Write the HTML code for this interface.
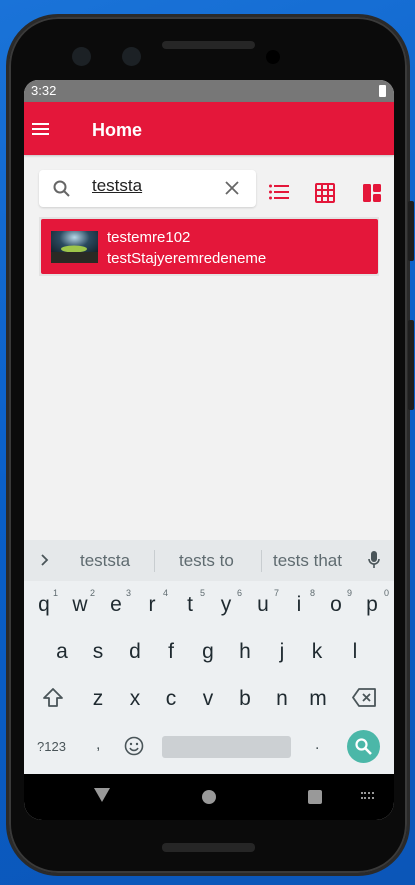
<!DOCTYPE html>
<html><head><meta charset="utf-8"><style>
*{margin:0;padding:0;box-sizing:border-box}
body{width:415px;height:885px;overflow:hidden;position:relative;background:linear-gradient(160deg,#1a73d8 0%,#0a5fc8 50%,#0b56b8 100%);font-family:"Liberation Sans",sans-serif}
.a{position:absolute}
.k{position:absolute;font-size:21px;color:#1f2a30;transform:translateX(-50%)}
.n{position:absolute;font-size:9px;color:#5f6b70}
</style></head><body>
<!-- phone body -->
<div class="a" style="left:6px;top:14px;width:404px;height:862px;background:#0b0b0b;border-radius:52px;border:3px solid #2a2a2a;box-shadow:inset 0 0 0 2px #3a3a3a"></div>
<div class="a" style="left:408px;top:201px;width:6px;height:60px;background:#1e1e1e;border-radius:2px"></div>
<div class="a" style="left:408px;top:320px;width:6px;height:90px;background:#1e1e1e;border-radius:2px"></div>
<!-- cameras & speaker -->
<div class="a" style="left:72px;top:47px;width:19px;height:19px;border-radius:50%;background:#1c2125"></div>
<div class="a" style="left:122px;top:47px;width:19px;height:19px;border-radius:50%;background:#1c2125"></div>
<div class="a" style="left:162px;top:41px;width:93px;height:8px;border-radius:4px;background:#262626"></div>
<div class="a" style="left:266px;top:50px;width:14px;height:14px;border-radius:50%;background:#000"></div>
<div class="a" style="left:162px;top:843px;width:93px;height:9px;border-radius:4px;background:#262626"></div>
<!-- screen -->
<div class="a" style="left:24px;top:80px;width:370px;height:740px;background:#f2f2f2;border-radius:14px 14px 18px 18px;overflow:hidden">
 <div class="a" style="left:0;top:0;width:370px;height:22px;background:#777"></div>
 <div class="a" style="left:7px;top:3px;color:#fff;font-size:13px">3:32</div>
 <div class="a" style="left:355px;top:5px;width:7px;height:12px;background:#fff;border-radius:1px"></div>
 <div class="a" style="left:0;top:22px;width:370px;height:53px;background:#e4173a;box-shadow:0 1px 2px rgba(0,0,0,.2)"></div>
 <div class="a" style="left:8px;top:43px;width:17px;height:2px;background:#fff;box-shadow:0 5px 0 #fff,0 10px 0 #fff"></div>
 <div class="a" style="left:68px;top:40px;color:#fff;font-size:18px;font-weight:bold">Home</div>
 <!-- search -->
 <div class="a" style="left:15px;top:90px;width:217px;height:37px;background:#fff;border-radius:4px;box-shadow:0 1px 2px rgba(0,0,0,.15)"></div>
 <svg class="a" style="left:28px;top:99px" width="20" height="20" viewBox="0 0 20 20"><circle cx="8" cy="8" r="5.5" fill="none" stroke="#666" stroke-width="2"/><path d="M12 12l5 5" stroke="#666" stroke-width="2"/></svg>
 <div class="a" style="left:68px;top:96px;font-size:17px;color:#222;text-decoration:underline">teststa</div>
 <svg class="a" style="left:201px;top:101px" width="14" height="14" viewBox="0 0 14 14"><path d="M1 1l12 12M13 1L1 13" stroke="#666" stroke-width="1.8"/></svg>
 <!-- icons -->
 <svg class="a" style="left:245px;top:104px" width="20" height="16" viewBox="0 0 20 16"><g fill="#e4173a"><circle cx="1.5" cy="2" r="1.5"/><circle cx="1.5" cy="8" r="1.5"/><circle cx="1.5" cy="14" r="1.5"/><rect x="5" y="1" width="15" height="2"/><rect x="5" y="7" width="15" height="2"/><rect x="5" y="13" width="15" height="2"/></g></svg>
 <svg class="a" style="left:291px;top:103px" width="20" height="20" viewBox="0 0 20 20"><rect x="1" y="1" width="18" height="18" rx="1" fill="none" stroke="#e4173a" stroke-width="2"/><path d="M7 1v18M13 1v18M1 7h18M1 13h18" stroke="#e4173a" stroke-width="2"/></svg>
 <svg class="a" style="left:339px;top:104px" width="18" height="18" viewBox="0 0 18 18"><g fill="#e4173a"><rect x="0" y="0" width="8" height="18" rx="1.5"/><rect x="10" y="0" width="8" height="8" rx="1.5"/><rect x="10" y="10" width="8" height="8" rx="1.5"/></g></svg>
 <!-- card -->
 <div class="a" style="left:15px;top:137px;width:340px;height:59px;background:#e3e3e3"></div>
 <div class="a" style="left:17px;top:139px;width:337px;height:55px;background:#e4173a;border-radius:2px"></div>
 <svg class="a" style="left:27px;top:151px" width="47" height="32" viewBox="0 0 47 32"><defs><radialGradient id="g" cx=".5" cy=".2" r=".8"><stop offset="0" stop-color="#b8d8e8"/><stop offset=".4" stop-color="#2b4a60"/><stop offset="1" stop-color="#0c1418"/></radialGradient></defs><rect width="47" height="32" fill="url(#g)"/><ellipse cx="23" cy="18" rx="13" ry="3.5" fill="#9ec64a"/><rect y="21" width="47" height="11" fill="#2a2a24"/></svg>
 <div class="a" style="left:83px;top:149px;color:#fff;font-size:15px">testemre102</div>
 <div class="a" style="left:83px;top:170px;color:#fff;font-size:15px">testStajyeremredeneme</div>
 <!-- keyboard -->
 <div class="a" style="left:0;top:460px;width:370px;height:234px;background:#edf0f2"></div>
 <div class="a" style="left:0;top:460px;width:370px;height:41px;background:#e5e8ea"></div>
 <svg class="a" style="left:17px;top:474px" width="8" height="12" viewBox="0 0 8 12"><path d="M1 1l5 5-5 5" fill="none" stroke="#4a5559" stroke-width="1.8"/></svg>
 <div class="a" style="left:56px;top:471px;font-size:17px;color:#5f6b70">teststa</div>
 <div class="a" style="left:130px;top:470px;width:1px;height:22px;background:#c8cdd0"></div>
 <div class="a" style="left:155px;top:471px;font-size:17px;color:#5f6b70">tests to</div>
 <div class="a" style="left:237px;top:470px;width:1px;height:22px;background:#c8cdd0"></div>
 <div class="a" style="left:249px;top:471px;font-size:17px;color:#5f6b70">tests that</div>
 <svg class="a" style="left:344px;top:471px" width="12" height="18" viewBox="0 0 12 18"><rect x="3" y="0" width="6" height="11" rx="3" fill="#4a5559"/><path d="M1 8a5 5 0 0010 0M6 13v4" fill="none" stroke="#4a5559" stroke-width="1.6"/></svg>
 <div class="k" style="left:20px;top:513px">q</div><div class="k" style="left:56px;top:513px">w</div><div class="k" style="left:92px;top:513px">e</div><div class="k" style="left:128px;top:513px">r</div><div class="k" style="left:166px;top:513px">t</div><div class="k" style="left:202px;top:513px">y</div><div class="k" style="left:239px;top:513px">u</div><div class="k" style="left:275px;top:513px">i</div><div class="k" style="left:312px;top:513px">o</div><div class="k" style="left:348px;top:513px">p</div>
 <div class="n" style="left:29px;top:508px">1</div><div class="n" style="left:66px;top:508px">2</div><div class="n" style="left:102px;top:508px">3</div><div class="n" style="left:139px;top:508px">4</div><div class="n" style="left:176px;top:508px">5</div><div class="n" style="left:213px;top:508px">6</div><div class="n" style="left:250px;top:508px">7</div><div class="n" style="left:286px;top:508px">8</div><div class="n" style="left:323px;top:508px">9</div><div class="n" style="left:360px;top:508px">0</div>
 <div class="k" style="left:38px;top:560px">a</div><div class="k" style="left:74px;top:560px">s</div><div class="k" style="left:111px;top:560px">d</div><div class="k" style="left:147px;top:560px">f</div><div class="k" style="left:184px;top:560px">g</div><div class="k" style="left:221px;top:560px">h</div><div class="k" style="left:258px;top:560px">j</div><div class="k" style="left:293px;top:560px">k</div><div class="k" style="left:331px;top:560px">l</div>
 <svg class="a" style="left:18px;top:607px" width="22" height="22" viewBox="0 0 22 22"><path d="M11 2L2 11h5v8h8v-8h5z" fill="none" stroke="#4a5559" stroke-width="1.8" stroke-linejoin="round"/></svg>
 <div class="k" style="left:74px;top:607px">z</div><div class="k" style="left:111px;top:607px">x</div><div class="k" style="left:147px;top:607px">c</div><div class="k" style="left:184px;top:607px">v</div><div class="k" style="left:221px;top:607px">b</div><div class="k" style="left:258px;top:607px">n</div><div class="k" style="left:294px;top:607px">m</div>
 <svg class="a" style="left:328px;top:608px" width="25" height="19" viewBox="0 0 25 19"><path d="M7 1h16v17H7L1 9.5z" fill="none" stroke="#4a5559" stroke-width="1.8" stroke-linejoin="round"/><path d="M11 6l7 7M18 6l-7 7" stroke="#4a5559" stroke-width="1.8"/></svg>
 <div class="a" style="left:13px;top:659px;font-size:13px;color:#4a5559">?123</div>
 <div class="a" style="left:72px;top:656px;font-size:16px;color:#4a5559">,</div>
 <svg class="a" style="left:100px;top:656px" width="20" height="20" viewBox="0 0 20 20"><circle cx="10" cy="10" r="8.5" fill="none" stroke="#4a5559" stroke-width="1.6"/><circle cx="7" cy="8" r="1.2" fill="#4a5559"/><circle cx="13" cy="8" r="1.2" fill="#4a5559"/><path d="M6 12a4.5 4.5 0 008 0" fill="none" stroke="#4a5559" stroke-width="1.6"/></svg>
 <div class="a" style="left:138px;top:656px;width:129px;height:22px;background:#ccd0d3;border-radius:3px"></div>
 <div class="a" style="left:291px;top:656px;font-size:16px;color:#4a5559">.</div>
 <div class="a" style="left:323px;top:650px;width:33px;height:33px;border-radius:50%;background:#4bb7a8"></div>
 <svg class="a" style="left:330px;top:657px" width="19" height="19" viewBox="0 0 19 19"><circle cx="7.5" cy="7.5" r="5" fill="none" stroke="#fff" stroke-width="2.2"/><path d="M11 11l6 6" stroke="#fff" stroke-width="2.6"/></svg>
 <!-- nav bar -->
 <div class="a" style="left:0;top:694px;width:370px;height:46px;background:#000"></div>
 <div class="a" style="left:70px;top:708px;width:0;height:0;border-left:8px solid transparent;border-right:8px solid transparent;border-top:14px solid #999"></div>
 <div class="a" style="left:178px;top:710px;width:14px;height:14px;border-radius:50%;background:#999"></div>
 <div class="a" style="left:284px;top:710px;width:14px;height:14px;border-radius:2px;background:#999"></div>
 <div class="a" style="left:337px;top:712px;width:13px;height:7px;border-top:2px dotted #999;border-bottom:2px dotted #999"></div>
</div>
</body></html>
